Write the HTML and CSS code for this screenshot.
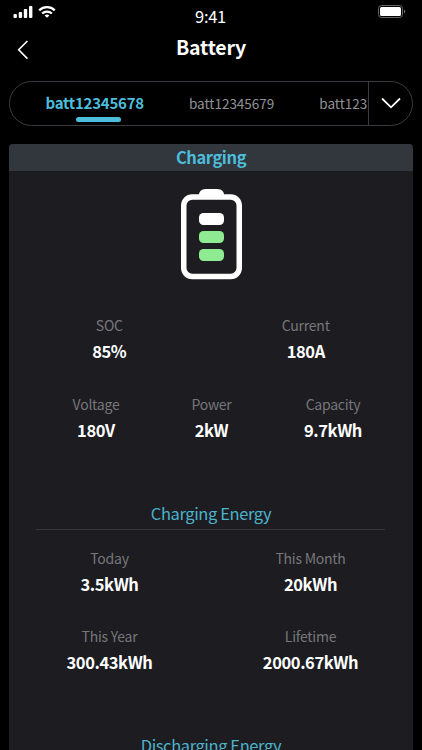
FILE: index.html
```html
<!DOCTYPE html>
<html lang="en">
<head>
<meta charset="utf-8">
<meta name="viewport" content="width=device-width, initial-scale=1">
<title>Battery</title>
<link rel="stylesheet" href="styles.css">
</head>
<body>
<main class="screen">
  <header class="status">
    <div class="signals">
      <svg width="20" height="14" viewBox="0 0 20 14" fill="#fff"><rect x="0.5" y="9" width="3.4" height="4" rx="1"/><rect x="5.7" y="7" width="3.4" height="6" rx="1"/><rect x="10.8" y="4" width="3.4" height="9" rx="1"/><rect x="16" y="1" width="3.4" height="12" rx="1"/></svg>
      <svg width="18" height="14" viewBox="0 0 18 14" fill="none" stroke="#fff" stroke-width="2.3"><path d="M1.2 5.3a11.3 11.3 0 0 1 15.6 0M4.1 8.5a7.1 7.1 0 0 1 9.8 0"/><path d="M9 12.8 6.6 10.5a3.6 3.6 0 0 1 4.8 0z" fill="#fff" stroke="none"/></svg>
    </div>
    <time class="clock">9:41</time>
    <svg class="power-icon" width="28" height="13" viewBox="0 0 28 13"><rect x="0.5" y="0.5" width="24" height="12" rx="3" fill="none" stroke="#666"/><rect x="2" y="2" width="21" height="9" rx="1.6" fill="#fff"/><path d="M26 4.4c1.8.7 1.8 3.5 0 4.2z" fill="#666"/></svg>
  </header>
  <nav class="titlebar">
    <svg class="back" width="12" height="20" viewBox="0 0 12 20" fill="none" stroke="#fff" stroke-width="1.6"><path d="M10.4 1 1.7 9.8l8.7 8.8"/></svg>
    <h1 class="title">Battery</h1>
  </nav>
  <div class="picker">
    <div class="tabs">
      <span class="tab tab-active">batt12345678</span>
      <span class="tab">batt12345679</span>
      <span class="tab">batt123</span>
    </div>
    <div class="more">
      <svg width="20" height="12" viewBox="0 0 20 12" fill="none" stroke="#fff" stroke-width="1.8"><path d="m1 1.5 9 8.8 9-8.8"/></svg>
    </div>
  </div>
  <section class="card">
    <h2 class="card-head">Charging</h2>
    <svg class="battery" width="62" height="91" viewBox="0 0 62 91"><path d="M18 8V6.5Q18 0 24.5 0h12Q43 0 43 6.500V8z" fill="#fff"/><rect x="2.750" y="8" width="55.500" height="79.500" rx="8.500" fill="none" stroke="#fff" stroke-width="5.500"/><rect x="18" y="24" width="25" height="12" rx="4.500" fill="#fff"/><rect x="18" y="42" width="25" height="12" rx="4.500" fill="#8feb91"/><rect x="18" y="60" width="25" height="12" rx="4.500" fill="#8feb91"/></svg>
    <dl class="row row-main">
      <div class="stat"><dt>SOC</dt><dd>85%</dd></div>
      <div class="stat"><dt>Current</dt><dd>180A</dd></div>
    </dl>
    <dl class="row row-three">
      <div class="stat"><dt>Voltage</dt><dd>180V</dd></div>
      <div class="stat"><dt>Power</dt><dd>2kW</dd></div>
      <div class="stat"><dt>Capacity</dt><dd>9.7kWh</dd></div>
    </dl>
    <h3 class="energy">Charging Energy</h3>
    <dl class="row row-energy">
      <div class="stat"><dt>Today</dt><dd>3.5kWh</dd></div>
      <div class="stat"><dt>This Month</dt><dd>20kWh</dd></div>
    </dl>
    <dl class="row row-energy">
      <div class="stat"><dt>This Year</dt><dd>300.43kWh</dd></div>
      <div class="stat"><dt>Lifetime</dt><dd>2000.67kWh</dd></div>
    </dl>
    <h3 class="energy energy-next">Discharging Energy</h3>
  </section>
</main>
</body>
</html>
```
FILE: styles.css
```css
* {
  box-sizing: border-box;
  margin: 0;
  padding: 0;
}

body {
  background: #000;
  color: #fff;
  font-family: "Noto Sans CJK SC", "Noto Sans", sans-serif;
}

svg {
  display: block;
}

.screen {
  height: 750px;
  overflow: hidden;
  display: flex;
  flex-direction: column;
}

.status {
  flex: none;
  height: 32px;
  display: grid;
  grid-template-columns: 1fr auto 1fr;
  padding: 0 14px 0 13px;
}

.signals {
  display: flex;
  gap: 5px;
  padding-top: 4.5px;
}

.clock {
  font-size: 16.5px;
  letter-spacing: -0.3px;
  line-height: 32px;
}

.power-icon {
  justify-self: end;
  margin: 5px 2px 0 0;
}

.titlebar {
  flex: none;
  height: 49px;
  display: grid;
  grid-template-columns: 44px 1fr 44px;
}

.back {
  margin: 8px 0 0 17px;
}

.title {
  font-size: 19.5px;
  letter-spacing: -0.2px;
  line-height: 30px;
  font-weight: 700;
  text-align: center;
}

.picker {
  flex: none;
  height: 45px;
  margin: 0 9px;
  display: flex;
  border: 1px solid #3a3b40;
  border-radius: 23px;
  overflow: hidden;
}

.tabs {
  width: 358px;
  display: flex;
  gap: 45px;
  padding-left: 35.5px;
  overflow: hidden;
}

.tab {
  flex: none;
  color: #929296;
  font-size: 13.5px;
  line-height: 43px;
}

.tab-active {
  display: flex;
  flex-direction: column;
  align-items: center;
  color: #4cbdda;
  font-size: 15px;
  letter-spacing: -0.22px;
  line-height: 41px;
  font-weight: 700;
}

.tab-active::after {
  content: "";
  width: 45px;
  height: 5px;
  margin: -6.5px 0 0 7px;
  border-radius: 3px;
  background: #4cbdda;
}

.more {
  flex: 1;
  border-left: 1px solid #3a3b40;
  padding: 15px 0 0 12px;
}

.card {
  flex: none;
  width: 404px;
  min-height: 640px;
  margin: 18px 0 0 9px;
  display: flex;
  flex-direction: column;
  border-radius: 4px 4px 0 0;
  background: #1c1c21;
  overflow: hidden;
}

.card-head {
  height: 27px;
  background: #32363d;
  color: #4cbdda;
  font-size: 16.5px;
  letter-spacing: -0.4px;
  line-height: 26px;
  font-weight: 700;
  text-align: center;
}

.battery {
  margin: 18px 0 0 172px;
}

.row {
  display: grid;
  height: 79px;
}

.row-main {
  grid-template-columns: 196.5px 196.5px;
  padding-left: 2px;
  margin-top: 33px;
}

.row-three {
  grid-template-columns: 118px 113px 130px;
  padding-left: 28px;
}

.row-energy {
  height: 78px;
  grid-template-columns: 201px 201px;
}

.stat {
  text-align: center;
  white-space: nowrap;
}

dt {
  color: #77777b;
  font-size: 14px;
  letter-spacing: -0.25px;
  line-height: 24px;
}

dd {
  font-size: 16.5px;
  letter-spacing: -0.4px;
  line-height: 28px;
  font-weight: 700;
}

.energy {
  height: 29px;
  margin: 30px 28px 16px 27px;
  padding-left: 1px;
  border-bottom: 1px solid #36363b;
  color: #4cb3cb;
  font-size: 16.5px;
  letter-spacing: -0.4px;
  line-height: 24px;
  font-weight: 400;
  text-align: center;
}

.energy-next {
  margin-top: 31px;
}
```
